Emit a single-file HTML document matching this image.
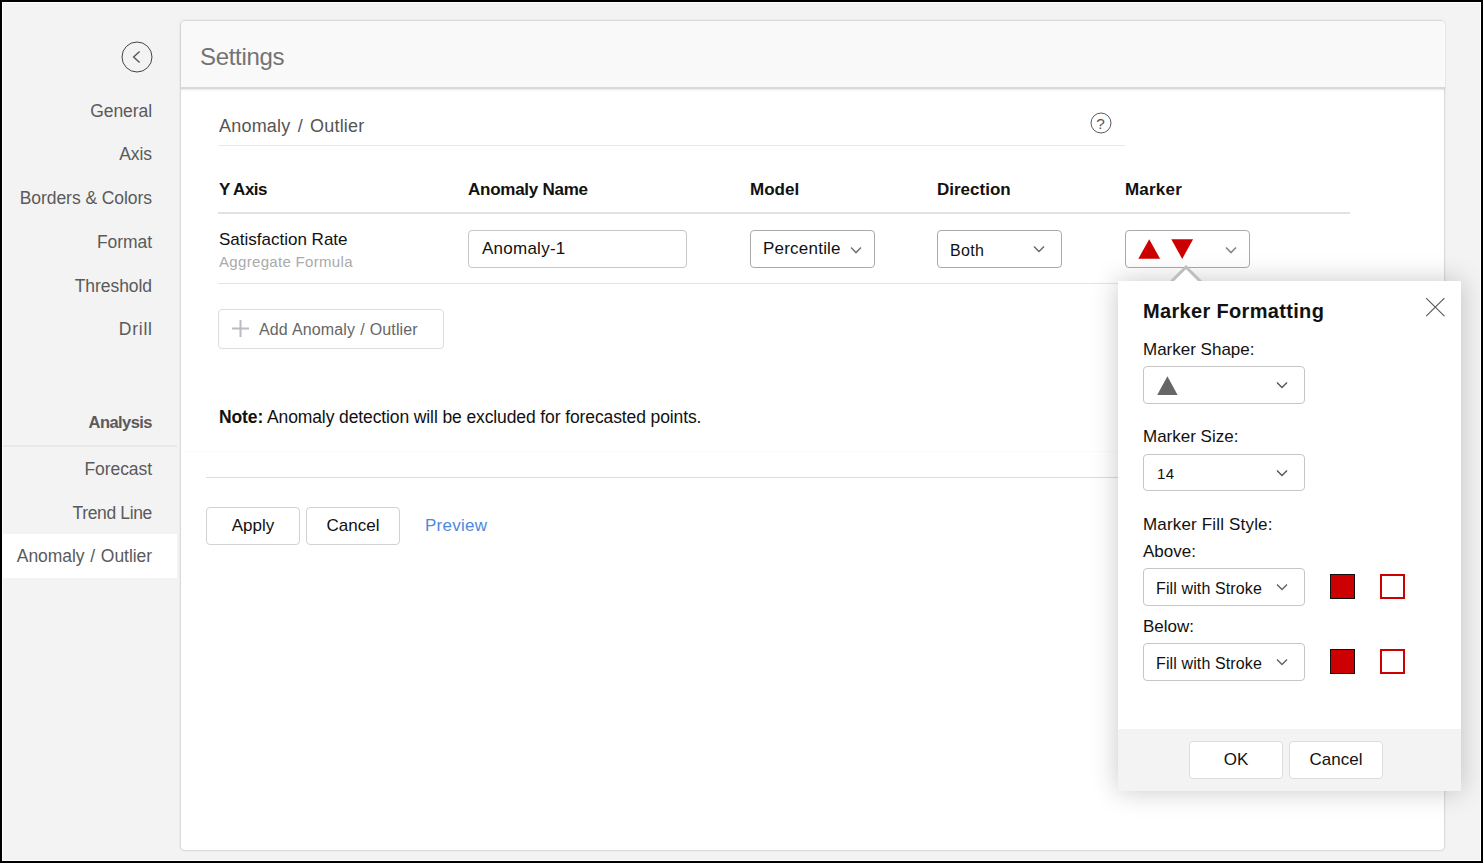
<!DOCTYPE html>
<html lang="en">
<head>
<meta charset="utf-8">
<title>Settings - Anomaly / Outlier</title>
<style>
*{box-sizing:border-box;margin:0;padding:0}
html,body{width:1483px;height:863px;overflow:hidden;background:#f3f3f3}
body{font-family:"Liberation Sans",sans-serif;color:#111;position:relative}
.frame{position:absolute;left:0;top:0;width:1483px;height:863px;border:2px solid #000;z-index:50;pointer-events:none}
.frame:after{content:"";position:absolute;left:0;top:0;right:0;bottom:0;border:1px solid #fff}
.abs{position:absolute;white-space:nowrap}
/* sidebar */
.nav{position:absolute;right:1331px;white-space:nowrap;font-size:17.5px;color:#5a5a5a;line-height:22px;text-align:right;letter-spacing:-.06px}
.navsel{position:absolute;left:3px;top:534px;width:174px;height:44px;background:#fff}
.navline{position:absolute;left:3px;top:445px;width:174px;height:2px;background:#e9e9e9}
.back{position:absolute;left:120.6px;top:41px;width:32px;height:32px}
/* main panel */
.panel{position:absolute;left:180px;top:20px;width:1265px;height:831px;background:#fff;border:1px solid #dadada;border-radius:5px;box-shadow:0 0 2px rgba(0,0,0,.10)}
.phead{position:absolute;left:181px;top:21px;width:1264px;height:68px;background:#f9f9f9;border-radius:4px 4px 0 0;border-bottom:2px solid #d8d8d8;box-shadow:0 1px 2px rgba(0,0,0,.10)}
.title{left:200px;top:43px;font-size:24px;line-height:28px;color:#737373;letter-spacing:-.32px}
.h2{left:219px;top:115px;font-size:18px;line-height:22px;color:#555;word-spacing:2px;letter-spacing:.2px}
.hline{position:absolute;background:#e4e4e4;height:1px}
.th{font-weight:bold;font-size:17px;line-height:22px;top:179px;color:#111}
.box{position:absolute;background:#fff;border:1px solid #c6c6c6;border-radius:4px}
.btn{position:absolute;background:#fff;border:1px solid #d2d2d2;border-radius:4px;font-size:17px;line-height:22px;text-align:center;color:#111}
.chev{position:absolute;width:12px;height:8px}
/* popup */
.pop{position:absolute;left:1118px;top:281px;width:343px;height:510px;background:#fff;box-shadow:0 0 25px rgba(0,0,0,.22)}
.popfoot{position:absolute;left:1118px;top:729px;width:343px;height:62px;background:#f3f3f3}
.lbl{font-size:17px;line-height:22px;color:#111}
.sw{position:absolute;width:25px;height:25px}
</style>
</head>
<body>

<!-- sidebar -->
<svg class="back" viewBox="0 0 32 32"><circle cx="16" cy="16" r="15" fill="none" stroke="#444" stroke-width="1"/><path d="M18.6 10.4 L12.6 16 L18.6 21.6" fill="none" stroke="#555" stroke-width="1.4"/></svg>
<div class="nav" style="top:100px">General</div>
<div class="nav" style="top:143px">Axis</div>
<div class="nav" style="top:187px">Borders &amp; Colors</div>
<div class="nav" style="top:231px">Format</div>
<div class="nav" style="top:275px">Threshold</div>
<div class="nav" style="top:318px;letter-spacing:.75px;right:1330.3px">Drill</div>
<div class="nav" style="top:411px;font-weight:bold;font-size:16.5px;letter-spacing:-.55px;right:1331px">Analysis</div>
<div class="navline"></div>
<div class="nav" style="top:458px">Forecast</div>
<div class="nav" style="top:502px;letter-spacing:-.35px">Trend Line</div>
<div class="navsel"></div>
<div class="nav" style="top:545px;word-spacing:1px">Anomaly / Outlier</div>

<!-- main panel -->
<div class="panel"></div>
<div class="phead"></div>
<div class="abs title">Settings</div>

<div class="abs h2">Anomaly / Outlier</div>
<svg class="abs" style="left:1090.4px;top:112.3px;width:22px;height:22px" viewBox="0 0 22 22"><circle cx="11" cy="11" r="10" fill="none" stroke="#5a5a5a" stroke-width="1"/><text x="10.6" y="16.5" font-size="15.4" text-anchor="middle" fill="#555" font-family="Liberation Sans, sans-serif">?</text></svg>
<div class="hline" style="left:218px;top:145px;width:907px;background:#e9e9e9"></div>

<div class="abs th" style="left:219px;letter-spacing:-.5px">Y Axis</div>
<div class="abs th" style="left:468px;letter-spacing:-.25px">Anomaly Name</div>
<div class="abs th" style="left:750px">Model</div>
<div class="abs th" style="left:937px">Direction</div>
<div class="abs th" style="left:1125px;letter-spacing:.2px">Marker</div>
<div class="hline" style="left:218px;top:212px;width:1132px;height:2px;background:#e2e2e2"></div>

<div class="abs" style="left:219px;top:229px;font-size:17px;line-height:22px">Satisfaction Rate</div>
<div class="abs" style="left:219px;top:252px;font-size:15px;line-height:20px;color:#aaa;letter-spacing:.32px">Aggregate Formula</div>

<div class="box" style="left:468px;top:230px;width:219px;height:38px"></div>
<div class="abs" style="left:482px;top:238px;font-size:17px;line-height:22px;letter-spacing:.25px">Anomaly-1</div>

<div class="box" style="left:750px;top:230px;width:125px;height:38px;border-color:#aaa"></div>
<div class="abs" style="left:763px;top:238px;font-size:17px;line-height:22px;letter-spacing:.22px">Percentile</div>
<svg class="chev" style="left:850px;top:246px" viewBox="0 0 12 8"><path d="M1 1.5 L6 6.5 L11 1.5" fill="none" stroke="#777" stroke-width="1.6"/></svg>

<div class="box" style="left:937px;top:230px;width:125px;height:38px;border-color:#aaa"></div>
<div class="abs" style="left:950px;top:241px;font-size:16px;line-height:20px;letter-spacing:.3px">Both</div>
<svg class="chev" style="left:1033px;top:245px" viewBox="0 0 12 8"><path d="M1 1.5 L6 6.5 L11 1.5" fill="none" stroke="#666" stroke-width="1.4"/></svg>

<div class="box" style="left:1125px;top:230px;width:125px;height:38px;border-color:#aaa"></div>
<svg class="abs" style="left:1138px;top:239px;width:56px;height:20px" viewBox="0 0 56 20"><path d="M0.3 19.8 L11.2 0.2 L22.1 19.8 Z" fill="#cc0000"/><path d="M33.3 0.3 L55.1 0.3 L44.2 19.9 Z" fill="#cc0000"/></svg>
<svg class="chev" style="left:1225px;top:246px" viewBox="0 0 12 8"><path d="M1 1.5 L6 6.5 L11 1.5" fill="none" stroke="#888" stroke-width="1.7"/></svg>

<div class="hline" style="left:218px;top:283px;width:1132px"></div>

<div class="box" style="left:218px;top:309px;width:226px;height:40px;border-color:#ddd"></div>
<svg class="abs" style="left:231px;top:319px;width:19px;height:19px" viewBox="0 0 19 19"><path d="M9.5 1 V18 M1 9.5 H18" stroke="#bbbbc2" stroke-width="2" fill="none"/></svg>
<div class="abs" style="left:259px;top:320px;font-size:16px;line-height:20px;color:#666;word-spacing:.6px;letter-spacing:.1px">Add Anomaly / Outlier</div>

<div class="abs" style="left:219px;top:406px;font-size:17.5px;line-height:22px;letter-spacing:-.11px"><b>Note:</b> Anomaly detection will be excluded for forecasted points.</div>

<div class="hline" style="left:181px;top:451px;width:1264px;background:#fbfbfb"></div>
<div class="hline" style="left:206px;top:477px;width:1214px;background:#dcdcdc"></div>

<div class="btn" style="left:206px;top:507px;width:94px;height:38px;padding-top:7px">Apply</div>
<div class="btn" style="left:306px;top:507px;width:94px;height:38px;padding-top:7px">Cancel</div>
<div class="abs" style="left:425px;top:515px;font-size:17px;line-height:22px;color:#5088dc;letter-spacing:.25px">Preview</div>

<!-- popup -->
<div class="pop"></div>
<svg class="abs" style="left:1168px;top:263px;width:36px;height:18px" viewBox="0 0 36 18"><path d="M2 20 L18 4 L34 20" fill="#fff" stroke="#bebebe" stroke-width="3" stroke-linejoin="miter"/></svg>
<div class="popfoot"></div>
<div class="abs" style="left:1143px;top:298px;font-size:20px;line-height:26px;font-weight:bold;color:#111;letter-spacing:.33px">Marker Formatting</div>
<svg class="abs" style="left:1425px;top:297px;width:21px;height:21px" viewBox="0 0 21 21"><path d="M1.2 1.2 L19.4 19.2 M19.4 1.2 L1.2 19.2" stroke="#555" stroke-width="1.1" fill="none"/></svg>

<div class="abs lbl" style="left:1143px;top:339px">Marker Shape:</div>
<div class="box" style="left:1143px;top:366px;width:162px;height:38px"></div>
<svg class="abs" style="left:1157px;top:376px;width:21px;height:19px" viewBox="0 0 21 19"><path d="M0.2 19 L10.4 0.2 L20.6 19 Z" fill="#666"/></svg>
<svg class="chev" style="left:1276px;top:381px" viewBox="0 0 12 8"><path d="M1 1.5 L6 6.5 L11 1.5" fill="none" stroke="#555" stroke-width="1.4"/></svg>

<div class="abs lbl" style="left:1143px;top:426px">Marker Size:</div>
<div class="box" style="left:1143px;top:454px;width:162px;height:37px"></div>
<div class="abs" style="left:1157px;top:464px;font-size:15px;line-height:20px;letter-spacing:.5px">14</div>
<svg class="chev" style="left:1276px;top:469px" viewBox="0 0 12 8"><path d="M1 1.5 L6 6.5 L11 1.5" fill="none" stroke="#555" stroke-width="1.4"/></svg>

<div class="abs lbl" style="left:1143px;top:514px;letter-spacing:.17px">Marker Fill Style:</div>
<div class="abs lbl" style="left:1143px;top:541px">Above:</div>
<div class="box" style="left:1143px;top:568px;width:162px;height:38px"></div>
<div class="abs" style="left:1156px;top:579px;font-size:16px;line-height:20px;letter-spacing:.12px">Fill with Stroke</div>
<svg class="chev" style="left:1276px;top:583px" viewBox="0 0 12 8"><path d="M1 1.5 L6 6.5 L11 1.5" fill="none" stroke="#666" stroke-width="1.5"/></svg>
<div class="sw" style="left:1330px;top:574px;background:#cc0000;border:1px solid #111"></div>
<div class="sw" style="left:1380px;top:574px;background:#fff;border:2px solid #cc0000"></div>

<div class="abs lbl" style="left:1143px;top:616px">Below:</div>
<div class="box" style="left:1143px;top:643px;width:162px;height:38px"></div>
<div class="abs" style="left:1156px;top:654px;font-size:16px;line-height:20px;letter-spacing:.12px">Fill with Stroke</div>
<svg class="chev" style="left:1276px;top:658px" viewBox="0 0 12 8"><path d="M1 1.5 L6 6.5 L11 1.5" fill="none" stroke="#666" stroke-width="1.5"/></svg>
<div class="sw" style="left:1330px;top:649px;background:#cc0000;border:1px solid #111"></div>
<div class="sw" style="left:1380px;top:649px;background:#fff;border:2px solid #cc0000"></div>

<div class="btn" style="left:1189px;top:741px;width:94px;height:38px;padding-top:7px;border-color:#ddd">OK</div>
<div class="btn" style="left:1289px;top:741px;width:94px;height:38px;padding-top:7px;border-color:#ddd">Cancel</div>

<div class="frame"></div>
</body>
</html>
